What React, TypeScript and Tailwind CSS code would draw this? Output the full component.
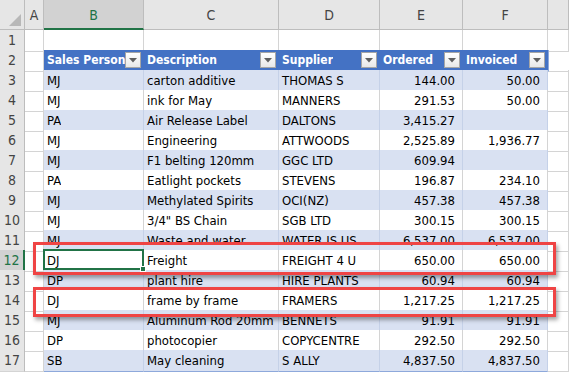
import React from 'react';

const font = { fontFamily: '"DejaVu Sans Condensed", "Liberation Sans", sans-serif' };

type Row = [string, string, string, string, string];

const rows: Row[] = [
  ['MJ', 'carton additive', 'THOMAS S', '144.00', '50.00'],
  ['MJ', 'ink for May', 'MANNERS', '291.53', '50.00'],
  ['PA', 'Air Release Label', 'DALTONS', '3,415.27', ''],
  ['MJ', 'Engineering', 'ATTWOODS', '2,525.89', '1,936.77'],
  ['MJ', 'F1 belting 120mm', 'GGC LTD', '609.94', ''],
  ['PA', 'Eatlight pockets', 'STEVENS', '196.87', '234.10'],
  ['MJ', 'Methylated Spirits', 'OCI(NZ)', '457.38', '457.38'],
  ['MJ', '3/4" BS Chain', 'SGB LTD', '300.15', '300.15'],
  ['MJ', 'Waste and water', 'WATER IS US', '6,537.00', '6,537.00'],
  ['DJ', 'Freight', 'FREIGHT 4 U', '650.00', '650.00'],
  ['DP', 'plant hire', 'HIRE PLANTS', '60.94', '60.94'],
  ['DJ', 'frame by frame', 'FRAMERS', '1,217.25', '1,217.25'],
  ['MJ', 'Aluminum Rod 20mm', 'BENNETS', '91.91', '91.91'],
  ['DP', 'photocopier', 'COPYCENTRE', '292.50', '292.50'],
  ['SB', 'May cleaning', 'S ALLY', '4,837.50', '4,837.50'],
];

const cols = 'grid grid-cols-[25px_19px_100px_135px_101px_83px_85px_1fr]';

function Dropdown() {
  return (
    <div className="ml-auto mr-[2px] flex h-4 w-4 shrink-0 items-center justify-center border border-[#a6a6a6] bg-gradient-to-b from-white to-[#e8e8e8]">
      <svg width="8" height="5" viewBox="0 0 8 5">
        <path d="M0 0 L8 0 L4 4.5 Z" fill="#606060" />
      </svg>
    </div>
  );
}

function HeaderCell({ label }: { label: string }) {
  return (
    <div className="flex h-5 items-center border-r border-[#4472c4] bg-[#4472c4] pl-[3px] text-[12px] font-bold text-white">
      <span className="overflow-hidden whitespace-nowrap">{label}</span>
      <Dropdown />
    </div>
  );
}

export default function App() {
  return (
    <div className="relative h-[373px] w-[569px] overflow-hidden bg-white text-[13px] text-black" style={font}>
      {/* column headers */}
      <div className={`${cols} h-[30px] bg-[#e6e6e6] text-[14px] text-[#444]`}>
        <div className="relative border-r border-b border-[#bdbdbd]">
          <svg className="absolute bottom-[3px] right-[3px]" width="12" height="12" viewBox="0 0 12 12">
            <path d="M12 0 L12 12 L0 12 Z" fill="#b8b8b8" />
          </svg>
        </div>
        {['A', 'B', 'C', 'D', 'E', 'F', ''].map((c) => (
          <div
            key={c}
            className={
              c === 'B'
                ? 'flex items-end justify-center border-r border-b-2 border-r-[#bdbdbd] border-b-[#217346] bg-[#d2d2d2] pb-[2px] text-[#217346]'
                : 'flex items-end justify-center border-r border-b border-[#bdbdbd] pb-[3px]'
            }
          >
            {c}
          </div>
        ))}
      </div>

      {/* row 1 */}
      <div className={`${cols} h-5`}>
        <div className="flex items-center justify-center border-r border-b border-r-[#bdbdbd] border-b-[#d4d4d4] bg-[#e6e6e6] text-[14px] text-[#444]">1</div>
        {[0, 1, 2, 3, 4, 5, 6].map((i) => (
          <div key={i} className="border-r border-b border-[#d4d4d4]" />
        ))}
      </div>

      {/* row 2 table header */}
      <div className={`${cols} h-5`}>
        <div className="flex items-center justify-center border-r border-b border-r-[#bdbdbd] border-b-[#d4d4d4] bg-[#e6e6e6] text-[14px] text-[#444]">2</div>
        <div className="border-r border-b border-[#d4d4d4]" />
        <HeaderCell label="Sales Person" />
        <HeaderCell label="Description" />
        <HeaderCell label="Supplier" />
        <HeaderCell label="Ordered" />
        <HeaderCell label="Invoiced" />
        <div className="border-b border-l border-b-[#d4d4d4] border-l-[#8ea9db]" />
      </div>

      {rows.map((r, idx) => {
        const n = idx + 3;
        const band = n % 2 === 1;
        const sel = n === 12;
        const cell = band
          ? 'flex items-center whitespace-nowrap border-r border-b border-r-[#c5d1e8] border-b-[#8ea9db] bg-[#d9e1f2]'
          : 'flex items-center whitespace-nowrap border-r border-b border-r-[#d4d4d4] border-b-[#8ea9db] bg-white';
        return (
          <div key={n} className={`${cols} h-5`}>
            <div
              className={
                sel
                  ? 'flex items-center justify-center border-r-2 border-b border-r-[#217346] border-b-[#d4d4d4] bg-[#d2d2d2] text-[14px] text-[#217346]'
                  : 'flex items-center justify-center border-r border-b border-r-[#bdbdbd] border-b-[#d4d4d4] bg-[#e6e6e6] text-[14px] text-[#444]'
              }
            >
              {n}
            </div>
            <div className="border-r border-b border-[#d4d4d4]" />
            <div className={`${cell} relative pl-[3px]`}>
              <span className="overflow-hidden">{r[0]}</span>
              {sel && (
                <div className="absolute -left-px -top-px z-10 h-[21px] w-[101px] border-2 border-[#217346]">
                  <div className="absolute -bottom-[4px] -right-[4px] h-[6px] w-[6px] border border-white bg-[#217346]" />
                </div>
              )}
            </div>
            <div className={`${cell} overflow-hidden pl-[3px]`}>{r[1]}</div>
            <div className={`${cell} overflow-hidden pl-[3px]`}>{r[2]}</div>
            <div className={`${cell} overflow-hidden justify-end pr-[7px]`}>{r[3]}</div>
            <div className={`${cell} overflow-hidden justify-end border-r-[#8ea9db] pr-[7px]`}>{r[4]}</div>
            <div className="border-r border-b border-[#d4d4d4]" />
          </div>
        );
      })}

      {/* highlight boxes */}
      <div className="pointer-events-none absolute left-[33px] top-[242px] z-20 h-[33px] w-[523px] border-[3px] border-[#ef4444] shadow-[2px_3px_4px_rgba(0,0,0,0.35)]" />
      <div className="pointer-events-none absolute left-[33px] top-[287px] z-20 h-[30px] w-[523px] border-[3px] border-[#ef4444] shadow-[2px_3px_4px_rgba(0,0,0,0.35)]" />
    </div>
  );
}
